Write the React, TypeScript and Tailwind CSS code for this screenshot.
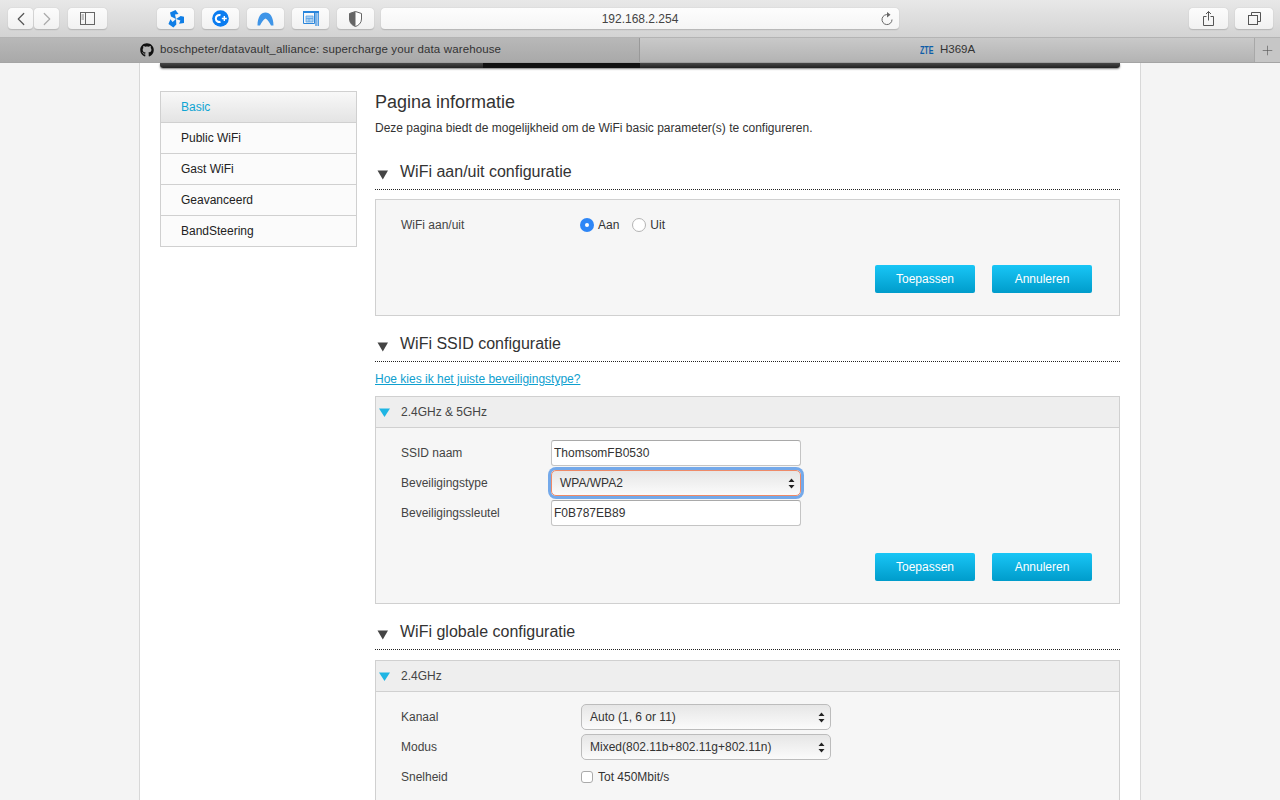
import React from 'react';
import { FaGithub } from 'react-icons/fa';
import { ChevronLeft, ChevronRight, Plus } from 'lucide-react';

const menuItems = ['Basic', 'Public WiFi', 'Gast WiFi', 'Geavanceerd', 'BandSteering'];

const ToolButton: React.FC<{ w: string; children: React.ReactNode }> = ({ w, children }) => (
  <div className={`${w} h-[22px] flex items-center justify-center rounded-[4px] bg-gradient-to-b from-[#fcfcfc] to-[#f1f1f1] border-b border-[#b9b9b9] shadow-[0_0_1px_rgba(0,0,0,0.25)]`}>
    {children}
  </div>
);

const Arrows: React.FC = () => (
  <svg width="7" height="11" viewBox="0 0 7 11" className="shrink-0">
    <path d="M3.5 0.5 L6.5 4 H0.5 Z M0.5 7 H6.5 L3.5 10.5 Z" fill="#222" />
  </svg>
);

const SectionTitle: React.FC<{ title: string; className?: string }> = ({ title, className }) => (
  <div className={`h-[32px] pb-[4px] flex items-center border-b border-dotted border-[#222] ${className ?? ''}`}>
    <svg width="12" height="10" viewBox="0 0 12 10" className="ml-[2px] mt-[6px] shrink-0">
      <path d="M0.5 0.5 H11 L5.8 9.5 Z" fill="#444" />
    </svg>
    <span className="ml-[11px] text-[16px] text-[#333] leading-none">{title}</span>
  </div>
);

const PanelHeader: React.FC<{ title: string }> = ({ title }) => (
  <div className="h-[31px] flex items-center bg-[#eeeeee] border-b border-[#d0d0d0]">
    <svg width="11" height="9" viewBox="0 0 11 9" className="ml-[3px] shrink-0">
      <path d="M0 0.5 H11 L5.5 9 Z" fill="#1fb5e3" />
    </svg>
    <span className="ml-[11px] text-[12px] text-[#444]">{title}</span>
  </div>
);

const Buttons: React.FC = () => (
  <div className="flex justify-end gap-[17px] pr-[27px]">
    {['Toepassen', 'Annuleren'].map((label) => (
      <button
        key={label}
        className="w-[100px] h-[28px] rounded-[2px] bg-gradient-to-b from-[#18c6f6] to-[#009ccb] text-white text-[12px]"
      >
        {label}
      </button>
    ))}
  </div>
);

const TextRow: React.FC<{ label: string; value: string }> = ({ label, value }) => (
  <div className="h-[30px] flex items-center">
    <span className="w-[150px] text-[12px] text-[#444]">{label}</span>
    <input
      readOnly
      value={value}
      className="w-[250px] h-[26px] px-[2px] bg-white border border-[#c4c4c4] border-t-[#a9a9a9] rounded-[3px] text-[12px] text-[#333] outline-none"
    />
  </div>
);

const SelectBox: React.FC<{ value: string; focused?: boolean }> = ({ value, focused }) => (
  <div
    className={`w-[250px] h-[26px] pl-[8px] pr-[5px] flex items-center justify-between rounded-[5px] border bg-gradient-to-b from-[#e6e6e6] to-[#fbfbfb] text-[12px] text-[#333] ${
      focused ? 'border-[#ee8a68] shadow-[0_0_0_3px_#74a9ea]' : 'border-[#bcbcbc]'
    }`}
  >
    <span>{value}</span>
    <Arrows />
  </div>
);

export default function App() {
  return (
    <div className="w-[1280px] h-[800px] overflow-hidden flex flex-col bg-[#f4f4f4] [font-family:'Liberation_Sans',Arial,sans-serif]">
      {/* toolbar */}
      <div className="h-[38px] shrink-0 flex items-center pl-[8px] pr-[7px] pt-[1px] bg-gradient-to-b from-[#e8e8e8] to-[#d3d3d3] border-b border-[#b4b4b4]">
        <div className="flex gap-[1px]">
          <ToolButton w="w-[25px]"><ChevronLeft size={22} strokeWidth={1.3} className="text-[#555]" /></ToolButton>
          <ToolButton w="w-[25px]"><ChevronRight size={22} strokeWidth={1.3} className="text-[#aaa]" /></ToolButton>
        </div>
        <div className="ml-[9px]">
          <ToolButton w="w-[39px]">
            <svg width="15" height="13" viewBox="0 0 15 13">
              <rect x="0.5" y="0.5" width="14" height="12" fill="none" stroke="#666" />
              <path d="M5.5 0.5 V12.5" stroke="#666" />
              <path d="M1.5 3 H4 M1.5 5 H4 M1.5 7 H4" stroke="#888" />
            </svg>
          </ToolButton>
        </div>
        <div className="ml-[50px] flex gap-[8px]">
          <ToolButton w="w-[37px]">
            <svg width="16" height="18" viewBox="0 0 16 18" fill="#0f7ee6">
              <path d="M8 9 L3 6.5 L2 2.5 L7.5 0 L10.5 4 L7 4.5 Z" />
              <path d="M8 9 L3 6.5 L2 2.5 L7.5 0 L10.5 4 L7 4.5 Z" transform="rotate(120 8 9)" />
              <path d="M8 9 L3 6.5 L2 2.5 L7.5 0 L10.5 4 L7 4.5 Z" transform="rotate(240 8 9)" />
            </svg>
          </ToolButton>
          <ToolButton w="w-[37px]">
            <svg width="17" height="17" viewBox="0 0 17 17">
              <circle cx="8.5" cy="8.5" r="8.3" fill="#0a7cf0" />
              <path d="M8.5 5.2 A3.5 3.5 0 1 0 8.5 11.8" fill="none" stroke="#fff" strokeWidth="2" />
              <path d="M9.8 8.5 H14.8 M12.3 6 V11" stroke="#fff" strokeWidth="1.4" />
            </svg>
          </ToolButton>
          <ToolButton w="w-[37px]">
            <svg width="17" height="14" viewBox="0 0 17 14">
              <path d="M0.5 13.5 C0.5 5 4 0.5 8.5 0.5 C13 0.5 16.5 5 16.5 13.5 L14 13.5 C12.5 10.5 10.5 7.5 8.5 6.5 C6.5 7.5 4.5 10.5 3 13.5 Z" fill="#3f95e8" />
            </svg>
          </ToolButton>
          <ToolButton w="w-[37px]">
            <svg width="16" height="15" viewBox="0 0 16 15">
              <path d="M0 0 H16 V2 H0 Z" fill="#2a86dc" />
              <path d="M0.5 2 V12.5 H11.5 V2" fill="none" stroke="#2a86dc" />
              <path d="M3 5 H10 V11 H3 Z M3 7.5 H10 M6 7.5 V11" fill="#a9cff2" stroke="#5aa3e6" strokeWidth="0.8" />
              <path d="M13 2 V15 M15.2 2 V15" stroke="#2a86dc" strokeWidth="1.2" />
            </svg>
          </ToolButton>
          <ToolButton w="w-[37px]">
            <svg width="13" height="16" viewBox="0 0 13 16">
              <path d="M6.5 0.5 L12.5 2.5 V8 C12.5 12 9.5 14.5 6.5 15.5 C3.5 14.5 0.5 12 0.5 8 V2.5 Z" fill="#fff" stroke="#666" />
              <path d="M6.5 0.5 L0.5 2.5 V8 C0.5 12 3.5 14.5 6.5 15.5 Z" fill="#666" />
            </svg>
          </ToolButton>
        </div>
        <div className="ml-[7px] w-[518px] h-[22px] relative flex items-center justify-center rounded-[4px] bg-gradient-to-b from-[#fdfdfd] to-[#f5f5f5] border-b border-[#b9b9b9] shadow-[0_0_1px_rgba(0,0,0,0.25)] text-[12px] text-[#444]">
          192.168.2.254
          <svg width="12" height="14" viewBox="0 0 12 14" fill="none" className="absolute right-[6px] top-[4px]">
            <path d="M7.5 2.8 A5 5 0 1 0 11 7.5" stroke="#666" strokeWidth="1" />
            <path d="M6 0 L9.5 2.8 L6 5.5 Z" fill="#666" />
          </svg>
        </div>
        <div className="ml-auto flex gap-[7px]">
          <ToolButton w="w-[39px]">
            <svg width="11" height="15" viewBox="0 0 11 15" fill="none" stroke="#555">
              <path d="M3.5 5.5 H0.5 V14.5 H10.5 V5.5 H7.5 M5.5 9.5 V0.5 M3 3 L5.5 0.5 L8 3" />
            </svg>
          </ToolButton>
          <ToolButton w="w-[38px]">
            <svg width="13" height="13" viewBox="0 0 13 13" fill="none" stroke="#555">
              <path d="M3.5 3 V0.5 H12.5 V9.5 H9.5" />
              <rect x="0.5" y="3.5" width="9" height="9" />
            </svg>
          </ToolButton>
        </div>
      </div>

      {/* tabs */}
      <div className="h-[25px] shrink-0 flex border-b border-[#a4a4a4] text-[#333]">
        <div className="w-[640px] flex items-center pl-[140px] gap-[6px] bg-gradient-to-b from-[#b8b8b8] to-[#a9a9a9] border-r border-[#999]">
          <FaGithub size={14} className="text-[#111]" />
          <span className="text-[11.5px] tracking-[0.13px]">boschpeter/datavault_alliance: supercharge your data warehouse</span>
        </div>
        <div className="w-[614px] flex items-center pl-[280px] bg-gradient-to-b from-[#c9c9c9] to-[#b3b3b3]">
          <span className="w-[20px] text-[11px] font-bold text-[#0d5da8] origin-left scale-x-[0.65]">ZTE</span>
          <span className="text-[11.5px]">H369A</span>
        </div>
        <div className="w-[26px] flex items-center justify-center bg-[#c6c6c6] border-l border-[#a8a8a8]">
          <Plus size={15} strokeWidth={1} className="text-[#555]" />
        </div>
      </div>

      {/* page */}
      <div className="w-[1002px] ml-[139px] grow bg-white border-x border-[#d8d8d8] pl-[20px] pr-[20px]">
        <div className="h-[5px] flex rounded-b-[3px] overflow-hidden shadow-[0_1px_2px_rgba(0,0,0,0.5)]">
          <div className="w-[323px] bg-gradient-to-b from-[#484848] to-[#222]" />
          <div className="w-[157px] bg-[#111]" />
          <div className="grow bg-gradient-to-b from-[#484848] to-[#222]" />
        </div>
        <div className="mt-[23px] flex">
          {/* left menu */}
          <div className="w-[197px] h-[156px] shrink-0 border border-[#d0d0d0] border-b-0 self-start">
            {menuItems.map((item, i) => (
              <div
                key={item}
                className={`h-[31px] pl-[20px] flex items-center border-b border-[#d0d0d0] text-[12px] ${
                  i === 0 ? 'bg-gradient-to-b from-[#f8f8f8] to-[#e4e4e4] text-[#0fa5d3]' : 'bg-[#fbfbfb] text-[#222]'
                }`}
              >
                {item}
              </div>
            ))}
          </div>

          {/* main */}
          <div className="ml-[18px] w-[745px] shrink-0">
            <h1 className="h-[22px] text-[18px] leading-[22px] text-[#333]">Pagina informatie</h1>
            <p className="mt-[6px] h-[18px] text-[12px] leading-[18px] text-[#333]">
              Deze pagina biedt de mogelijkheid om de WiFi basic parameter(s) te configureren.
            </p>

            <SectionTitle title="WiFi aan/uit configuratie" className="mt-[21px]" />
            <div className="mt-[9px] h-[117px] border border-[#d0d0d0] bg-[#f6f6f6]">
              <div className="h-[50px] pl-[25px] flex items-center text-[12px] text-[#444]">
                <span className="w-[179px]">WiFi aan/uit</span>
                <span className="w-[14px] h-[14px] rounded-full bg-[#2e86f6] flex items-center justify-center">
                  <span className="w-[4px] h-[4px] rounded-full bg-white" />
                </span>
                <span className="ml-[4px] text-[#333]">Aan</span>
                <span className="ml-[13px] w-[14px] h-[14px] rounded-full bg-white border border-[#b4b4b4]" />
                <span className="ml-[4px] text-[#333]">Uit</span>
              </div>
              <div className="mt-[15px]"><Buttons /></div>
            </div>

            <SectionTitle title="WiFi SSID configuratie" className="mt-[14px]" />
            <a className="mt-[10px] block h-[15px] text-[12px] leading-[15px] text-[#0fa0cf] underline">
              Hoe kies ik het juiste beveiligingstype?
            </a>
            <div className="mt-[9px] h-[208px] border border-[#d0d0d0] bg-[#f6f6f6]">
              <PanelHeader title="2.4GHz &amp; 5GHz" />
              <div className="pl-[25px] pt-[10px]">
                <TextRow label="SSID naam" value="ThomsomFB0530" />
                <div className="h-[30px] flex items-center">
                  <span className="w-[150px] text-[12px] text-[#444]">Beveiligingstype</span>
                  <SelectBox value="WPA/WPA2" focused />
                </div>
                <TextRow label="Beveiligingssleutel" value="F0B787EB89" />
              </div>
              <div className="mt-[25px]"><Buttons /></div>
            </div>

            <SectionTitle title="WiFi globale configuratie" className="mt-[14px]" />
            <div className="mt-[10px] h-[160px] border border-[#d0d0d0] bg-[#f6f6f6]">
              <PanelHeader title="2.4GHz" />
              <div className="pl-[25px] pt-[10px] text-[12px] text-[#444]">
                <div className="h-[30px] flex items-center">
                  <span className="w-[180px]">Kanaal</span>
                  <SelectBox value="Auto (1, 6 or 11)" />
                </div>
                <div className="h-[30px] flex items-center">
                  <span className="w-[180px]">Modus</span>
                  <SelectBox value="Mixed(802.11b+802.11g+802.11n)" />
                </div>
                <div className="h-[30px] flex items-center">
                  <span className="w-[180px]">Snelheid</span>
                  <span className="w-[12px] h-[12px] rounded-[3px] bg-white border border-[#aaa]" />
                  <span className="ml-[5px] text-[#333]">Tot 450Mbit/s</span>
                </div>
              </div>
            </div>
          </div>
        </div>
      </div>
    </div>
  );
}
